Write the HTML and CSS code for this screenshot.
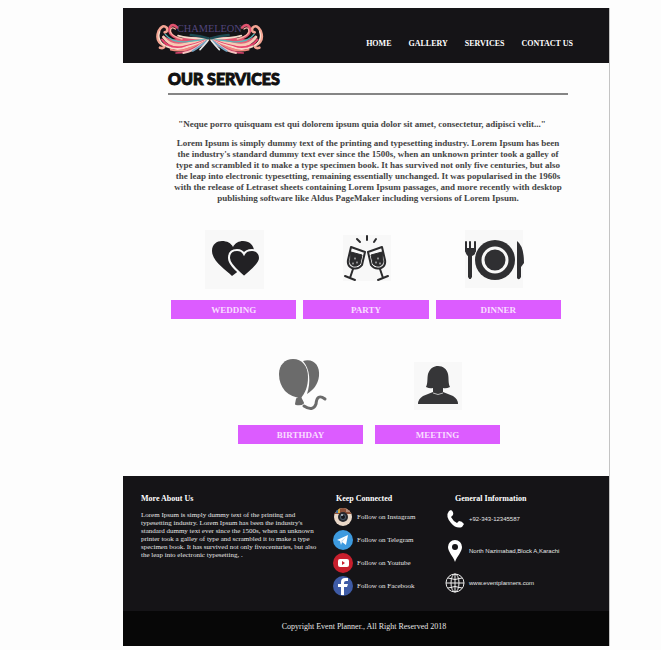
FILE: index.html
```html
<!DOCTYPE html>
<html lang="en">
<head>
<meta charset="utf-8">
<title>Chameleon Event Planner - Our Services</title>
<link rel="stylesheet" href="styles.css">
</head>
<body>
<div class="page">
  <header class="header">
    <svg class="logo" viewBox="18 18 324 102" role="img" aria-label="Chameleon">
      <defs>
        <g id="wing" fill="none" stroke-linecap="round">
          <path d="M40 60Q60 80 90 70Q130 60 176 70L160 92Q120 112 84 108Q52 96 40 60Z" fill="#e0647a"/>
          <path d="M30 98Q42 102 44 92Q14 80 26 48Q38 26 50 38Q56 50 44 52" stroke="#f3a493" stroke-width="8"/>
          <path d="M44 92Q20 74 29 50" stroke="#fbe0cf" stroke-width="4"/>
          <path d="M82 38Q68 24 60 36Q52 58 82 70Q118 82 174 72" stroke="#e0526e" stroke-width="8"/>
          <path d="M76 42Q62 32 61 50Q66 64 96 72" stroke="#f7b7a6" stroke-width="4"/>
          <path d="M40 66Q62 98 104 88Q146 80 174 74" stroke="#f8c9b4" stroke-width="8"/>
          <path d="M46 58Q66 84 112 80Q144 76 172 72" stroke="#55b5b6" stroke-width="4"/>
          <path d="M36 74Q58 104 98 96Q136 88 166 76" stroke="#e8416c" stroke-width="6"/>
          <path d="M50 94Q78 108 108 97Q144 88 168 77" stroke="#f6d7c8" stroke-width="6"/>
          <path d="M62 104Q88 112 114 101Q144 92 168 78" stroke="#ee8a7d" stroke-width="5"/>
          <path d="M78 114Q112 114 138 96L168 79" stroke="#d6436d" stroke-width="5"/>
          <path d="M100 114Q130 108 148 92L170 78" stroke="#f5c5c0" stroke-width="6"/>
          <path d="M128 108Q145 98 170 78" stroke="#6fa3c0" stroke-width="5"/>
          <path d="M150 104Q160 94 173 78" stroke="#e5e9e8" stroke-width="5"/>
          <path d="M84 62Q118 72 174 70" stroke="#f3dccb" stroke-width="5"/>
          <path d="M122 60Q150 62 176 70" stroke="#1d4b53" stroke-width="7"/>
        </g>
      </defs>
      <use href="#wing"/>
      <use href="#wing" transform="translate(358 0) scale(-1 1)"/>
      <text class="logo-name" x="178" y="51" text-anchor="middle">CHAMELEON</text>
    </svg>
    <nav class="nav">
      <a href="#">HOME</a>
      <a href="#">GALLERY</a>
      <a href="#">SERVICES</a>
      <a href="#">CONTACT US</a>
    </nav>
  </header>

  <main class="main">
    <h1 class="title">OUR SERVICES</h1>
    <p class="quote">"Neque porro quisquam est qui dolorem ipsum quia dolor sit amet, consectetur, adipisci velit..."</p>
    <p class="intro">Lorem Ipsum is simply dummy text of the printing and typesetting industry. Lorem Ipsum has been<br>
      the industry's standard dummy text ever since the 1500s, when an unknown printer took a galley of<br>
      type and scrambled it to make a type specimen book. It has survived not only five centuries, but also<br>
      the leap into electronic typesetting, remaining essentially unchanged. It was popularised in the 1960s<br>
      with the release of Letraset sheets containing Lorem Ipsum passages, and more recently with desktop<br>
      publishing software like Aldus PageMaker including versions of Lorem Ipsum.</p>

    <div class="services three">
      <div class="service">
        <svg class="art" viewBox="0 0 60 60" aria-hidden="true">
          <rect x="1" y="1" width="60" height="59" fill="#f8f8f8"/>
          <path d="M28 47C22 41 8 32 8 22C8 15 13 12 18 12C23 12 27 14 29 18C31 14 35 12 39 12C45 12 50 16 50 22C50 32 34 42 28 47Z" fill="#222124"/>
          <path d="M40 48C35 43 25 36 25 29C25 23 29 21 33 21C36 21 39 23 40 25C41 23 44 21 48 21C52 21 56 24 56 29C56 36 45 43 40 48Z" fill="#222124" stroke="#f8f8f8" stroke-width="2"/>
        </svg>
        <button class="label" type="button">WEDDING</button>
      </div>
      <div class="service">
        <svg class="art" viewBox="0 0 60 60" aria-hidden="true">
          <rect x="7" y="6" width="48" height="46" fill="#f8f8f8"/>
          <g id="glass" stroke="#2b2b2d" stroke-linecap="round" stroke-linejoin="round">
            <path d="M15 18L29 23L26 36Q22 41 16 39Q11 37 12 31Z" fill="#f8f8f8" stroke-width="2"/>
            <path d="M15 23L26 26L24 35Q21 38 17 37Q13 35 14 31Z" fill="#2b2b2d" stroke-width="1"/>
            <path d="M17 40L14 49M9 47L19 51" fill="none" stroke-width="2"/>
            <path d="M19 29V30M17 34V35M21 33V34" stroke="#f8f8f8" stroke-width="1"/>
          </g>
          <use href="#glass" transform="translate(61 0) scale(-1 1)"/>
          <path d="M21 10L24 13M31 7V11M40 10L38 13" fill="none" stroke="#2b2b2d" stroke-width="2" stroke-linecap="round"/>
        </svg>
        <button class="label" type="button">PARTY</button>
      </div>
      <div class="service">
        <svg class="art wide" viewBox="0 0 68 60" aria-hidden="true">
          <rect x="1" y="1" width="58" height="58" fill="#f8f8f8"/>
          <circle cx="31" cy="31" r="20" fill="#2f2f32"/>
          <circle cx="31" cy="31" r="12" fill="none" stroke="#f8f8f8" stroke-width="3"/>
          <path d="M2 13V22M6 13V24M11 13V22M6 24V49" fill="none" stroke="#2f2f32" stroke-width="2" stroke-linecap="round"/>
          <path d="M1 19H12Q12 26 8 27V48Q6 52 4 48V27Q1 25 1 19Z" fill="#2f2f32"/>
          <path d="M53 12Q60 17 60 34L57 38V48Q55 52 53 49Z" fill="#2f2f32"/>
        </svg>
        <button class="label" type="button">DINNER</button>
      </div>
    </div>

    <div class="services two">
      <div class="service">
        <svg class="art" viewBox="0 0 60 60" aria-hidden="true">
          <path d="M32 4C43 1 49 9 48 19C47 28 42 33 36 37C40 25 39 12 32 4Z" fill="#6b6b6b"/>
          <path d="M8 17C8 8 14 2 22 2C31 2 37 9 37 20C37 30 34 36 30 41Q20 40 14 34Q8 27 8 17Z" fill="#6b6b6b"/>
          <path d="M29 40L32 46Q30 48 25 47L26 42Z" fill="#6b6b6b" stroke="#6b6b6b" stroke-width="2" stroke-linejoin="round"/>
          <path d="M33 49Q42 55 45 47Q46 36 54 42" fill="none" stroke="#6b6b6b" stroke-width="3" stroke-linecap="round"/>
        </svg>
        <button class="label" type="button">BIRTHDAY</button>
      </div>
      <div class="service">
        <svg class="art" viewBox="0 0 60 60" aria-hidden="true">
          <rect x="6" y="5" width="48" height="48" fill="#f8f8f8"/>
          <path d="M18 30C20 26 19 22 20 17C22 11 26 9 30 9C35 9 39 12 40 17C41 22 40 26 42 30Q38 32 35 31V35L45 39Q50 42 50 47H10Q10 42 15 39L25 35V31Q22 32 18 30Z" fill="#363638"/>
          <path d="M25 36Q30 39 35 36" fill="none" stroke="#bdbdbd" stroke-width="1"/>
        </svg>
        <button class="label" type="button">MEETING</button>
      </div>
    </div>
  </main>

  <footer class="footer">
    <div class="columns">
      <section>
        <h2>More About Us</h2>
        <p class="about">Lorem Ipsum is simply dummy text of the printing and<br>
          typesetting industry. Lorem Ipsum has been the industry's<br>
          standard dummy text ever since the 1500s, when an unknown<br>
          printer took a galley of type and scrambled it to make a type<br>
          specimen book. It has survived not only fivecenturies, but also<br>
          the leap into electronic typesetting, .</p>
      </section>
      <section>
        <h2 class="inset-small">Keep Connected</h2>
        <ul class="social">
          <li><a href="#">
            <svg viewBox="0 0 20 20" aria-hidden="true"><clipPath id="round"><circle cx="10" cy="10" r="9"/></clipPath><g clip-path="url(#round)"><path d="M0 0H20V20H0Z" fill="#e9d8c8"/><path d="M0 0H20V7H0Z" fill="#8b4f38"/><path d="M3 0H5V6H3Z" fill="#3e76ad"/><path d="M5 0H7V6H5Z" fill="#d4a83d"/><path d="M13 2H17V5H13Z" fill="#b58a78"/></g><circle cx="10" cy="10" r="5" fill="#26272d"/><circle cx="10" cy="10" r="3" fill="#4b5968"/><circle cx="10" cy="10" r="2" fill="#15161b"/><circle cx="9" cy="8" r="1" fill="#b9c4ce"/></svg>
            Follow on Instagram</a></li>
          <li><a href="#">
            <svg viewBox="0 0 20 20" aria-hidden="true"><circle cx="10" cy="10" r="10" fill="#3d9adf"/><path d="M4 10L15 5L13 15L9 12L8 15L7 11Z" fill="#fff"/><path d="M8 11L13 7L9 12Z" fill="#b8d8ef"/></svg>
            Follow on Telegram</a></li>
          <li><a href="#">
            <svg viewBox="0 0 20 20" aria-hidden="true"><circle cx="10" cy="10" r="10" fill="#c71f2d"/><rect x="5" y="6" width="11" height="8" rx="2" fill="#fff"/><path d="M9 8L12 10L9 12Z" fill="#c71f2d"/></svg>
            Follow on Youtube</a></li>
          <li><a href="#">
            <svg viewBox="0 0 20 20" aria-hidden="true"><circle cx="10" cy="10" r="10" fill="#3e5ba6"/><path d="M8 19V11H5V8H8V6Q8 2 12 2H15V5H13Q11 5 11 7V8H15L14 11H11V19Z" fill="#fff"/></svg>
            Follow on Facebook</a></li>
        </ul>
      </section>
      <section>
        <h2 class="inset">General Information</h2>
        <ul class="contact">
          <li>
            <svg viewBox="0 0 20 22" aria-hidden="true"><path d="M4 3L6 2Q9 4 8 7L6 9Q8 13 12 15L14 13Q17 13 19 16L17 19Q11 21 6 15Q0 8 4 3Z" fill="#fff"/></svg>
            <span>+92-343-12345587</span></li>
          <li>
            <svg viewBox="0 0 20 22" aria-hidden="true"><path d="M10 22C8 16 3 12 3 7A7 7 0 0 1 17 7C17 12 12 16 10 22Z" fill="#fff"/><circle cx="10" cy="7" r="3" fill="#151417"/></svg>
            <span>North Nazimabad,Block A,Karachi</span></li>
          <li>
            <svg viewBox="0 0 20 22" aria-hidden="true"><g fill="none" stroke="#eee" stroke-width="1"><circle cx="10" cy="11" r="9"/><ellipse cx="10" cy="11" rx="4" ry="9"/><path d="M1 11H19M10 2V20M3 6Q10 9 17 6M3 16Q10 13 17 16"/></g></svg>
            <a href="#">www.eventplanners.com</a></li>
        </ul>
      </section>
    </div>
    <p class="copyright">Copyright Event Planner., All Right Reserved 2018</p>
  </footer>
</div>
</body>
</html>
```

FILE: styles.css
```css
* {
  box-sizing: border-box;
}

body {
  margin: 0;
  padding: 8px 51px 4px 123px;
  background: #fdfdfd;
  color: #444;
  font-family: "Liberation Serif", serif;
}

h1, h2, p, ul {
  margin: 0;
  padding: 0;
}

ul {
  list-style: none;
}

a {
  color: inherit;
  text-decoration: none;
}

svg {
  display: block;
  flex: none;
}

.page {
  border-right: 1px solid #c4c4c4;
}

.header {
  display: flex;
  justify-content: space-between;
  height: 55px;
  padding: 13px 36px 0 33px;
  background: #151417;
}

.logo {
  width: 108px;
  height: 34px;
}

.logo-name {
  fill: #51457c;
  font-size: 31px;
}

.nav {
  display: flex;
  gap: 17px;
  padding-top: 18px;
  color: #fff;
  font-size: 8px;
  font-weight: bold;
  line-height: 10px;
  white-space: nowrap;
}

.main {
  padding: 0 41px 32px 45px;
}

.title {
  padding: 6px 0 4px;
  border-bottom: 2px solid #858585;
  color: #111;
  font-family: Lato, sans-serif;
  font-size: 16px;
  font-weight: 900;
  line-height: 20px;
  -webkit-text-stroke: 1px #111;
}

.quote,
.intro {
  font-size: 9px;
  font-weight: bold;
  line-height: 11px;
  text-align: center;
  white-space: nowrap;
}

.quote {
  margin: 24px 12px 8px 0;
}

.services {
  display: grid;
}

.three {
  grid-template-columns: repeat(3, 1fr);
  gap: 7px;
  padding: 25px 7px 0 3px;
}

.two {
  grid-template-columns: repeat(2, 1fr);
  gap: 12px;
  padding: 38px 68px 0 70px;
}

.service {
  display: flex;
  flex-direction: column;
  align-items: center;
  gap: 11px;
}

.two .service {
  gap: 8px;
}

.art {
  width: 60px;
  height: 60px;
}

.wide {
  width: 68px;
}

.label {
  width: 100%;
  height: 19px;
  margin: 0;
  padding: 0;
  border: 0;
  background: #dc5cff;
  color: #f9dcff;
  font-family: inherit;
  font-size: 9px;
  font-weight: bold;
}

.footer {
  background: #151417;
  color: #e6e6e6;
}

.columns {
  display: grid;
  grid-template-columns: 192fr 112fr 146fr;
  padding: 18px 18px 12px;
  font-size: 7px;
  line-height: 8px;
  white-space: nowrap;
}

.columns h2 {
  margin-bottom: 7px;
  color: #fff;
  font-size: 8px;
  line-height: 10px;
}

.columns .inset {
  padding-left: 10px;
}

.columns .inset-small {
  padding-left: 3px;
}

.social a,
.contact li {
  display: flex;
  align-items: center;
  gap: 4px;
}

.social a {
  height: 23px;
}

.social svg {
  width: 20px;
  height: 20px;
}

.social {
  margin-top: -6px;
}

.contact {
  margin-top: -8px;
  font-family: "Liberation Sans", sans-serif;
  font-size: 6px;
}

.contact li {
  height: 32px;
}

.contact svg {
  width: 20px;
  height: 22px;
}

.copyright {
  padding: 11px 4px 14px 0;
  background: #070707;
  font-size: 8px;
  line-height: 10px;
  text-align: center;
}
```
